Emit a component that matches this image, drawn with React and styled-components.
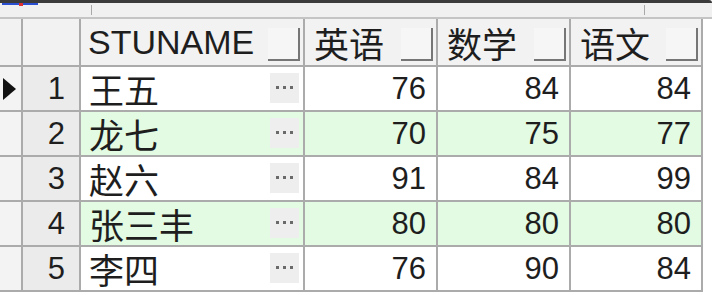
import React from 'react';
import styled, { createGlobalStyle } from 'styled-components';

const GlobalStyle = createGlobalStyle`
    html, body {
        margin: 0;
        padding: 0;
        background: #ffffff;
    }
    body {
        font-family: "Liberation Sans", "Noto Sans CJK SC", sans-serif;
        color: #1e1e1e;
    }
`;

const Window = styled.div`
    width: 712px;
    height: 295px;
    overflow: hidden;
    background: #ffffff;
`;

const TitleBar = styled.div`
    height: 3px;
    background: #3b3b3b;
    border-top-right-radius: 14px;
    position: relative;
`;

const TopIcon = styled.svg`
    position: absolute;
    left: 2px;
    top: 2px;
`;

const Toolbar = styled.div`
    height: 14px;
    background: #f0f0f0;
    border-bottom: 2px solid #c4c4c4;
    display: grid;
    grid-template-columns: 92px 553px 1fr;
`;

const ToolSection = styled.div`
    border-right: ${p => (p.$last ? 'none' : '1px solid #a9a9a9')};
    margin: 2px 0 2px 0;
`;

const Grid = styled.div`
    display: grid;
    grid-template-columns: 23px 58px 224px 133px 133px 132px;
    grid-auto-rows: 45px;
    grid-template-rows: 48px;
    width: 703px;
`;

const Cell = styled.div`
    box-sizing: border-box;
    border-right: 2px solid #ababab;
    border-bottom: 2px solid #ababab;
    display: flex;
    align-items: center;
    background: ${p => p.$bg || '#ffffff'};
    font-size: 31px;
    overflow: hidden;
    white-space: nowrap;
`;

const HeadCell = styled(Cell)`
    background: #f2f2f2;
    padding-left: ${p => p.$pad ?? 9}px;
    justify-content: space-between;
    padding-right: 3px;
    font-size: ${p => (p.$latin ? 34 : 35)}px;
`;

const SortBox = styled.div`
    width: 32px;
    height: 33px;
    flex-shrink: 0;
    box-sizing: border-box;
    background: #f6f6f6;
    border-right: 2px solid #767676;
    border-bottom: 2px solid #767676;
    margin-top: 4px;
`;

const IndicatorCell = styled(Cell)`
    background: #f3f3f3;
    padding-left: 3px;
`;

const NumCell = styled(Cell)`
    background: #ebebeb;
    justify-content: flex-end;
    padding-right: 14px;
`;

const NameCell = styled(Cell)`
    justify-content: space-between;
    padding-left: 8px;
    padding-right: 4px;
    font-size: 35px;
`;

const DotsButton = styled.div`
    width: 29px;
    height: 30px;
    flex-shrink: 0;
    background: #eeeeee;
    display: flex;
    align-items: center;
    justify-content: center;
    gap: 4px;
    margin-top: -2px;
`;

const Dot = styled.span`
    width: 3px;
    height: 3px;
    background: #6a6a6a;
`;

const ScoreCell = styled(Cell)`
    justify-content: flex-end;
    padding-right: 10px;
`;

const rows = [
    { id: 1, name: '王五', en: 76, math: 84, cn: 84 },
    { id: 2, name: '龙七', en: 70, math: 75, cn: 77 },
    { id: 3, name: '赵六', en: 91, math: 84, cn: 99 },
    { id: 4, name: '张三丰', en: 80, math: 80, cn: 80 },
    { id: 5, name: '李四', en: 76, math: 90, cn: 84 },
];

const Pointer = () => (
    <svg width="14" height="22" viewBox="0 0 14 22">
        <polygon points="0,0 13,11 0,22" fill="#111" />
    </svg>
);

const App = () => {
    return (
        <Window>
            <GlobalStyle />
            <TitleBar>
                <TopIcon width="38" height="5" viewBox="0 0 38 5">
                    <rect x="0" y="1" width="36" height="2" fill="#2a4fd0" />
                    <rect x="17" y="1" width="4" height="3" fill="#e03030" />
                </TopIcon>
            </TitleBar>
            <Toolbar>
                <ToolSection />
                <ToolSection />
                <ToolSection $last />
            </Toolbar>
            <Grid>
                <HeadCell $pad={0} />
                <HeadCell $pad={0} />
                <HeadCell $pad={7} $latin>
                    <span>STUNAME</span>
                    <SortBox />
                </HeadCell>
                <HeadCell>
                    <span>英语</span>
                    <SortBox />
                </HeadCell>
                <HeadCell>
                    <span>数学</span>
                    <SortBox />
                </HeadCell>
                <HeadCell>
                    <span>语文</span>
                    <SortBox />
                </HeadCell>
                {rows.map((r, i) => {
                    const bg = i % 2 === 1 ? '#e2fbe2' : '#ffffff';
                    return (
                        <React.Fragment key={r.id}>
                            <IndicatorCell>{i === 0 && <Pointer />}</IndicatorCell>
                            <NumCell>{r.id}</NumCell>
                            <NameCell $bg={bg}>
                                <span>{r.name}</span>
                                <DotsButton>
                                    <Dot />
                                    <Dot />
                                    <Dot />
                                </DotsButton>
                            </NameCell>
                            <ScoreCell $bg={bg}>{r.en}</ScoreCell>
                            <ScoreCell $bg={bg}>{r.math}</ScoreCell>
                            <ScoreCell $bg={bg}>{r.cn}</ScoreCell>
                        </React.Fragment>
                    );
                })}
            </Grid>
        </Window>
    );
};

export default App;
